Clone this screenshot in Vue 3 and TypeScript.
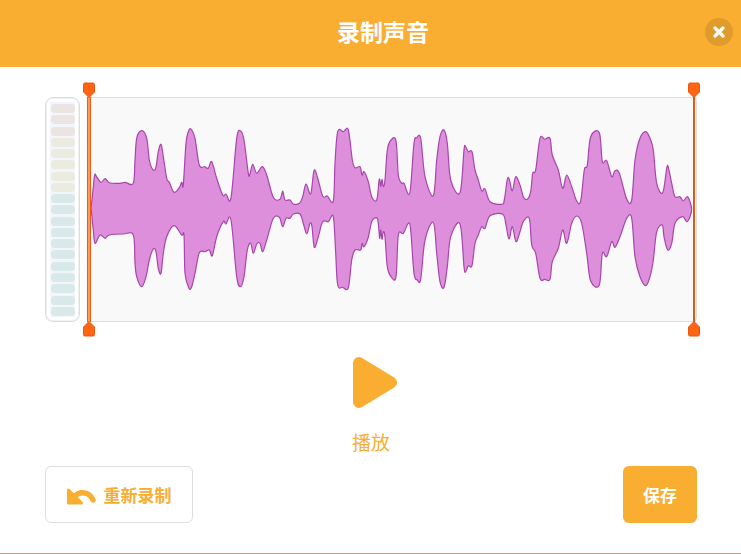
<template>
  <div class="record-modal">
    <header class="modal-header">
      <h2 class="modal-title">录制声音</h2>
      <button class="close-btn" aria-label="关闭">
        <svg width="12" height="12" viewBox="0 0 12 12">
          <path d="M2 2L10 10M10 2L2 10" stroke="#fff" stroke-width="3.2" stroke-linecap="round" />
        </svg>
      </button>
    </header>

    <div class="modal-body">
      <div class="wave-row">
        <div class="meter">
          <div class="meter-inner">
            <span v-for="(color, i) in meterColors" :key="i" class="meter-pill" :style="{ background: color }"></span>
          </div>
        </div>

        <div class="wave-panel">
          <svg class="wave" viewBox="87 97 610 225" preserveAspectRatio="none">
            <path :d="wavePath" fill="#de8fdc" stroke="#a845ac" stroke-width="1.2" stroke-linejoin="round" />
          </svg>

          <div class="trim trim-left">
            <svg class="handle handle-top" width="14" height="16" viewBox="0 0 14 16">
              <path d="M3 1H11Q12.5 1 12.5 2.5V10L7 15.5L1.5 10V2.5Q1.5 1 3 1Z" fill="#ff6414" stroke="#e8560f" />
            </svg>
            <svg class="handle handle-bottom" width="14" height="16" viewBox="0 0 14 16">
              <path d="M7 .5L12.5 6V13.5Q12.5 15 11 15H3Q1.5 15 1.5 13.5V6Z" fill="#ff6414" stroke="#e8560f" />
            </svg>
          </div>
          <div class="trim trim-right">
            <svg class="handle handle-top" width="14" height="16" viewBox="0 0 14 16">
              <path d="M3 1H11Q12.5 1 12.5 2.5V10L7 15.5L1.5 10V2.5Q1.5 1 3 1Z" fill="#ff6414" stroke="#e8560f" />
            </svg>
            <svg class="handle handle-bottom" width="14" height="16" viewBox="0 0 14 16">
              <path d="M7 .5L12.5 6V13.5Q12.5 15 11 15H3Q1.5 15 1.5 13.5V6Z" fill="#ff6414" stroke="#e8560f" />
            </svg>
          </div>
        </div>
      </div>

      <div class="play-area">
        <svg class="play-icon" width="46" height="53" viewBox="0 0 46 53">
          <path d="M7 7L39 26.5L7 46Z" fill="#f9ad31" stroke="#f9ad31" stroke-width="12" stroke-linejoin="round" />
        </svg>
        <div class="play-label">播放</div>
      </div>

      <div class="actions">
        <button class="btn btn-outline">
          <svg class="undo-icon" width="29" height="18" viewBox="0 0 29 18">
            <path d="M1.5 3V16H14.5Z" fill="#f9ad31" stroke="#f9ad31" stroke-width="3" stroke-linejoin="round" />
            <path d="M7 10C12 4 22 4 26 13" fill="none" stroke="#f9ad31" stroke-width="5.5" stroke-linecap="round" />
          </svg>
          <span>重新录制</span>
        </button>
        <button class="btn btn-save">保存</button>
      </div>
    </div>
  </div>
</template>

<script setup lang="ts">
import { computed } from 'vue'

type Pt = [number, number]

const meterColors: string[] = [
  ...Array(3).fill('#ebe4e2'),
  ...Array(5).fill('#ebebdf'),
  ...Array(11).fill('#d9e9e8'),
]

// traced from left to right, page coordinates
const upper: Pt[] = [
  [91, 208], [92.7, 193], [94.7, 175], [96.7, 177], [101, 182.3], [105.3, 178.7], [109.3, 182.7], [120, 183.3], [125, 182.3], [133.3, 183.3],
  [135, 160], [136.7, 138.3], [141.7, 130.7], [146.7, 138.3], [149.3, 160], [152.7, 169.3], [155.7, 168.3], [158.3, 151.7], [161, 144.3], [163.3, 156.7],
  [166.7, 178.3], [169.3, 182.3], [174, 192.3], [179.3, 187.7], [181.7, 182.3], [183.3, 185], [186, 143.3], [189, 130], [191.7, 130], [195, 138.3],
  [199.3, 165], [205, 166.7], [208.3, 168.3], [211.7, 161.7], [216.7, 178.3], [222.7, 195], [226, 194], [231, 197.7], [236.7, 138.3], [240.7, 131],
  [244, 140], [248.3, 173.3], [250, 174], [252.7, 164.3], [256.7, 173.3], [262.3, 166.7], [266.7, 175], [273.3, 197.3], [280, 199.3], [282.7, 191],
  [285, 200], [290, 200], [293.3, 204], [299.3, 203.3], [302.7, 196.7], [306, 184], [310.7, 194], [314, 170.7], [317.3, 176.7], [322.7, 196],
  [327.3, 196], [333.3, 201], [335, 163.3], [337.7, 131.7], [343.3, 131.7], [348.3, 130], [352.3, 160], [355, 167.7], [360, 166.7], [362, 175],
  [364, 171.7], [368.3, 181.7], [371.7, 196.7], [376.7, 200], [379.3, 179.3], [380.7, 186.7], [382, 179.3], [383.3, 186.7], [385, 180], [387.3, 150],
  [391, 140], [396, 141], [398.3, 175], [401.7, 183.3], [404, 183.3], [408.3, 194.3], [410.7, 186.7], [414, 143.3], [416.7, 137.7], [420.7, 138.3],
  [425, 176.7], [433.3, 195.7], [436.7, 160], [440, 136.7], [444, 130], [447.3, 143.3], [450.7, 180], [460, 192.7], [464, 150], [465.7, 146.7],
  [468.3, 151.7], [472, 151.7], [475, 170], [478.3, 180], [481.7, 191], [485, 189], [490, 201.7], [501.7, 204.3], [504.3, 200], [507.3, 179.3],
  [509.3, 179.3], [512.3, 190.7], [515.7, 176.7], [520, 185], [523.3, 196.7], [527.3, 199.3], [530.7, 191.7], [532.7, 173.3], [535.7, 170], [540, 138.3],
  [545, 139.3], [550, 138.3], [552.3, 155], [558.3, 170], [562.7, 188.3], [566.7, 175], [571.7, 186.7], [576.7, 201], [580.7, 201], [584.3, 170],
  [587.3, 165], [590.7, 136.7], [599.3, 132.7], [602.3, 161.7], [606.7, 160.7], [611.7, 176.7], [615, 170.7], [619.3, 173.3], [626.7, 199], [631.7, 200],
  [635, 160], [640, 138.3], [645.7, 131.7], [650, 138.3], [653.3, 150], [656.7, 183.3], [662.7, 192.7], [666.7, 168.3], [668.3, 167.3], [671.7, 183.3],
  [675, 196.7], [680, 196.7], [683.3, 201], [687.3, 196.7], [690, 201.7], [691.7, 209.3],
]

const lower: Pt[] = [
  [93.3, 230], [95, 243.3], [100, 235], [105, 238.3], [109.3, 235], [123.3, 234], [133.3, 235], [135, 263.3], [136.7, 276.7], [141.7, 286.7],
  [146, 276.7], [149.3, 260], [153.3, 249], [156, 251.7], [158.3, 268.3], [161, 273.3], [163.3, 253.3], [166.7, 236.7], [174, 225.7], [181.7, 235],
  [184, 235], [185, 273.3], [189, 288.3], [191.7, 286.7], [195, 273.3], [199.3, 252.7], [205, 251.7], [209.3, 250], [212.3, 255.7], [216.7, 236.7],
  [223.3, 221.7], [226, 224], [231, 220], [236.7, 276.7], [240.7, 286.7], [244, 276.7], [247.3, 250], [250.7, 243.3], [253.3, 253.3], [256.7, 244],
  [260, 243.3], [262.7, 251.7], [266.7, 240], [273.3, 218.3], [279.3, 217.3], [282.7, 226.7], [286, 218.3], [290, 218.3], [293.3, 214], [300, 214],
  [303.3, 223.3], [306.7, 234], [310, 223.3], [312, 226.7], [314.3, 247.3], [318.3, 236.7], [322.7, 221.7], [328.3, 221.7], [333.3, 216.7], [335.7, 253.3],
  [337.7, 285], [342.7, 287.3], [348.3, 287.7], [351.7, 260], [355, 250], [360.7, 250], [362, 243.3], [364, 246.7], [368.3, 237.3], [371.7, 221.7],
  [376.7, 217.7], [378.3, 223.3], [379.7, 238.3], [380.7, 230], [382, 239.3], [383.3, 231.7], [385, 236.7], [387.3, 266.7], [391, 276.7], [396, 276.7],
  [398.3, 235], [403.3, 233.3], [408.3, 223.3], [410.7, 230], [414, 273.3], [417.3, 280], [420.7, 279.3], [425, 240], [433.3, 222.3], [436.7, 253.3],
  [440, 281.7], [444, 287.3], [447.3, 266.7], [450.7, 236.7], [460, 224], [464, 266.7], [465.7, 271.7], [468.3, 265.7], [472, 265.7], [475, 243.3],
  [478.3, 235], [481.7, 226.7], [485, 228.3], [490, 215.7], [502.7, 214.3], [506, 225], [509, 239], [512.3, 226.7], [516, 241.7], [520, 231.7],
  [523.3, 221.7], [529.3, 218.3], [531.7, 245], [535.7, 253.3], [540, 278.3], [545, 279.3], [550, 279.3], [552.3, 261.7], [558.3, 248.3], [562.7, 230],
  [566.7, 243.3], [571.7, 223.3], [576.7, 216], [581.7, 223.3], [586.7, 253.3], [590.7, 281], [599.3, 285], [602.3, 253.3], [606.7, 256.7], [611.7, 241.7],
  [615, 247.3], [620, 236.7], [626.7, 218.3], [631.7, 218.3], [635, 256.7], [640, 276.7], [645.7, 285.7], [650, 276.7], [653.3, 260], [656.7, 231.7],
  [662.3, 225], [664, 236.7], [667.7, 250], [671.7, 243.3], [675, 223.3], [682.7, 216.7], [686.7, 221.7], [690, 216.7],
]

// catmull-rom through the traced points
const smooth = (pts: Pt[]): string => {
  let d = ''
  for (let i = 0; i < pts.length - 1; i++) {
    const p0 = pts[Math.max(i - 1, 0)]
    const p1 = pts[i]
    const p2 = pts[i + 1]
    const p3 = pts[Math.min(i + 2, pts.length - 1)]
    const c1x = p1[0] + (p2[0] - p0[0]) / 6
    const c1y = p1[1] + (p2[1] - p0[1]) / 6
    const c2x = p2[0] - (p3[0] - p1[0]) / 6
    const c2y = p2[1] - (p3[1] - p1[1]) / 6
    d += `C${c1x.toFixed(1)} ${c1y.toFixed(1)} ${c2x.toFixed(1)} ${c2y.toFixed(1)} ${p2[0]} ${p2[1]}`
  }
  return d
}

const wavePath = computed(() => {
  const outline = [...upper, ...[...lower].reverse()]
  return `M${outline[0][0]} ${outline[0][1]}${smooth(outline)}Z`
})
</script>

<style scoped>
.record-modal {
  height: 553px;
  background: #fff;
  border-bottom: 1px solid #d29c55;
  font-family: "Noto Sans CJK SC", "Liberation Sans", sans-serif;
}

.modal-header {
  height: 67px;
  background: #f9ad31;
  display: flex;
  align-items: center;
  padding: 0 8px 0 33px;
}

.modal-title {
  flex: 1;
  margin: 0 0 4px;
  text-align: center;
  color: #fff;
  font-size: 23px;
  font-weight: 700;
  line-height: 1;
}

.close-btn {
  width: 28px;
  height: 28px;
  margin-left: -28px;
  padding: 0;
  border: none;
  border-radius: 50%;
  background: rgba(0, 0, 0, 0.1);
  display: flex;
  align-items: center;
  justify-content: center;
  position: relative;
  top: -2px;
}

.modal-body {
  padding: 30px 44px 0 45px;
}

.wave-row {
  display: flex;
  gap: 7px;
  height: 225px;
}

.meter {
  width: 35px;
  box-sizing: border-box;
  border: 1px solid #ddd;
  box-shadow: inset 0 0 0 1px #f1f1f1;
  border-radius: 8px;
  background: #fff;
  padding: 4px;
}

.meter-inner {
  height: 100%;
  background: #f2f6fc;
  display: flex;
  flex-direction: column;
  justify-content: space-between;
  padding: 2px 0 1px;
  box-sizing: border-box;
}

.meter-pill {
  display: block;
  width: 24px;
  height: 9px;
  margin: 0 auto;
  border-radius: 4px;
}

.wave-panel {
  flex: 1;
  position: relative;
  background: #f9f9f9;
  border: 1px solid #ddd;
  border-radius: 4px;
  box-sizing: border-box;
}

.wave {
  position: absolute;
  inset: -1px;
  width: calc(100% + 2px);
  height: calc(100% + 2px);
}

.trim {
  position: absolute;
  top: -1px;
  bottom: -1px;
}

.trim-left {
  left: -1px;
  width: 4px;
  background: #ff9a5c;
  border-left: 1.5px solid #f0590f;
  border-right: 1.5px solid #f0590f;
  box-sizing: border-box;
}

.trim-right {
  right: 1px;
  width: 2.5px;
  background: #e8560f;
}

.handle {
  position: absolute;
  left: 50%;
  transform: translateX(-50%);
}

.handle-top {
  top: -15px;
}

.handle-bottom {
  bottom: -15px;
}

.play-area {
  display: flex;
  flex-direction: column;
  align-items: center;
  margin-top: 34px;
}

.play-icon {
  margin-left: 8px;
}

.play-label {
  margin-top: 19px;
  color: #f9ad31;
  font-size: 19px;
  line-height: 28px;
}

.actions {
  display: flex;
  justify-content: space-between;
  margin-top: 10px;
}

.btn {
  height: 57px;
  border-radius: 6px;
  font-family: inherit;
  font-size: 17px;
  font-weight: 700;
}

.btn-outline {
  width: 148px;
  background: #fff;
  border: 1px solid #ddd;
  color: #f9ad31;
  display: flex;
  align-items: center;
  justify-content: center;
  gap: 8px;
}

.undo-icon {
  margin-top: 2px;
}

.btn-save {
  width: 74px;
  background: #f9ad31;
  border: none;
  color: #fff;
}
</style>

<style>
html,
body {
  margin: 0;
  background: #fff;
}
</style>
